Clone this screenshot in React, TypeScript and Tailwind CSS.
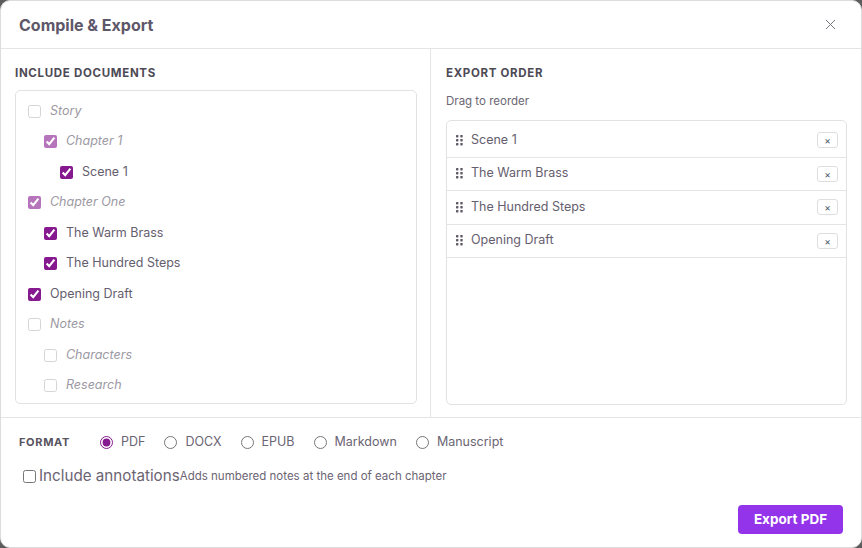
import { X } from "lucide-react";

type Node = { label: string; depth: number; folder?: boolean; checked: boolean };

const tree: Node[] = [
  { label: "Story", depth: 0, folder: true, checked: false },
  { label: "Chapter 1", depth: 1, folder: true, checked: true },
  { label: "Scene 1", depth: 2, checked: true },
  { label: "Chapter One", depth: 0, folder: true, checked: true },
  { label: "The Warm Brass", depth: 1, checked: true },
  { label: "The Hundred Steps", depth: 1, checked: true },
  { label: "Opening Draft", depth: 0, checked: true },
  { label: "Notes", depth: 0, folder: true, checked: false },
  { label: "Characters", depth: 1, folder: true, checked: false },
  { label: "Research", depth: 1, folder: true, checked: false },
];

const order = ["Scene 1", "The Warm Brass", "The Hundred Steps", "Opening Draft"];
const formats = ["PDF", "DOCX", "EPUB", "Markdown", "Manuscript"];

const pad = ["pl-3", "pl-7", "pl-11"];

function Grip() {
  return (
    <svg width="7" height="11" viewBox="0 0 7 11" className="text-[#5f5a66] shrink-0">
      {[0, 4, 8].map((y) => (
        <g key={y}>
          <rect x="0" y={y} width="2.4" height="2.4" rx="0.6" fill="currentColor" />
          <rect x="4.3" y={y} width="2.4" height="2.4" rx="0.6" fill="currentColor" />
        </g>
      ))}
    </svg>
  );
}

export default function App() {
  return (
    <div className="w-[862px] h-[548px] bg-[#5c5c5c] font-['Inter',sans-serif]">
      <div className="w-full h-full bg-white rounded-[10px] border border-[#dcdcdc] flex flex-col overflow-hidden">
        {/* header */}
        <div className="h-[48px] shrink-0 flex items-center justify-between pl-[18px] pr-[22px] border-b border-[#e5e5e5]">
          <h2 className="text-[16px] font-bold text-[#5e5669]">Compile &amp; Export</h2>
          <X size={17} strokeWidth={1.4} className="text-[#77737d]" />
        </div>

        {/* body */}
        <div className="flex h-[369px] shrink-0 border-b border-[#e5e5e5]">
          <div className="w-[430px] border-r border-[#e5e5e5] pl-[14px] pr-[13px] pt-[16px] flex flex-col">
            <h3 className="text-[11.5px] font-bold tracking-[0.06em] text-[#4d4a55] leading-[16px]">INCLUDE DOCUMENTS</h3>
            <div className="mt-[9px] h-[314px] border border-[#e2e2e2] rounded-[5px] pt-[5px]">
              {tree.map((n) => (
                <label
                  key={n.label}
                  className={`flex items-center gap-[9px] h-[30.5px] ${pad[n.depth]}`}
                >
                  <input
                    type="checkbox"
                    readOnly
                    checked={n.checked}
                    className={`w-[13px] h-[13px] m-0 accent-[#86198f] ${
                      n.folder ? (n.checked ? "opacity-60" : "opacity-30") : ""
                    }`}
                  />
                  <span
                    className={
                      n.folder
                        ? "text-[12.5px] italic text-[#9c99a3]"
                        : "text-[12.5px] text-[#655e6e]"
                    }
                  >
                    {n.label}
                  </span>
                </label>
              ))}
            </div>
          </div>

          <div className="flex-1 pl-[15px] pr-[14px] pt-[16px] flex flex-col">
            <h3 className="text-[11.5px] font-bold tracking-[0.06em] text-[#4d4a55] leading-[16px]">EXPORT ORDER</h3>
            <p className="mt-[13px] text-[11.5px] text-[#6b6673] leading-[14px]">Drag to reorder</p>
            <div className="mt-[12px] h-[285px] border border-[#e2e2e2] rounded-[5px] pt-[3px]">
              {order.map((o) => (
                <div
                  key={o}
                  className="flex items-center h-[33.5px] pl-[9px] pr-[8px] border-b border-[#e5e5e5]"
                >
                  <Grip />
                  <span className="ml-[8px] text-[12.5px] text-[#655e6e] flex-1">{o}</span>
                  <button className="w-[21px] h-[16px] border border-[#dedede] rounded-[3px] text-[10px] leading-none text-[#4a5a6a] flex items-center justify-center">
                    ×
                  </button>
                </div>
              ))}
            </div>
          </div>
        </div>

        {/* footer */}
        <div className="flex-1 flex flex-col pl-[18px] pr-[18px] pt-[15px]">
          <div className="flex items-center h-[18px]">
            <span className="text-[11px] font-bold tracking-[0.06em] text-[#57535e] w-[81px]">FORMAT</span>
            {formats.map((f, i) => (
              <label key={f} className="flex items-center mr-[19px]">
                <input
                  type="radio"
                  name="fmt"
                  readOnly
                  checked={i === 0}
                  className="w-[13px] h-[13px] m-0 accent-[#86198f]"
                />
                <span className="ml-[8px] text-[12.5px] text-[#6b6473]">{f}</span>
              </label>
            ))}
          </div>
          <label className="flex items-center mt-[14px] ml-[4px]">
            <input type="checkbox" readOnly className="w-[13px] h-[13px] m-0 mr-[3px]" />
            <span className="text-[15.2px] text-[#6b6473]">Include annotations</span>
            <span className="text-[11.5px] text-[#6b6473]">Adds numbered notes at the end of each chapter</span>
          </label>
          <div className="flex justify-end mt-auto mb-[13px]">
            <button className="w-[105px] h-[29px] rounded-[4px] bg-[#9333ea] text-white text-[13.5px] font-bold">
              Export PDF
            </button>
          </div>
        </div>
      </div>
    </div>
  );
}
